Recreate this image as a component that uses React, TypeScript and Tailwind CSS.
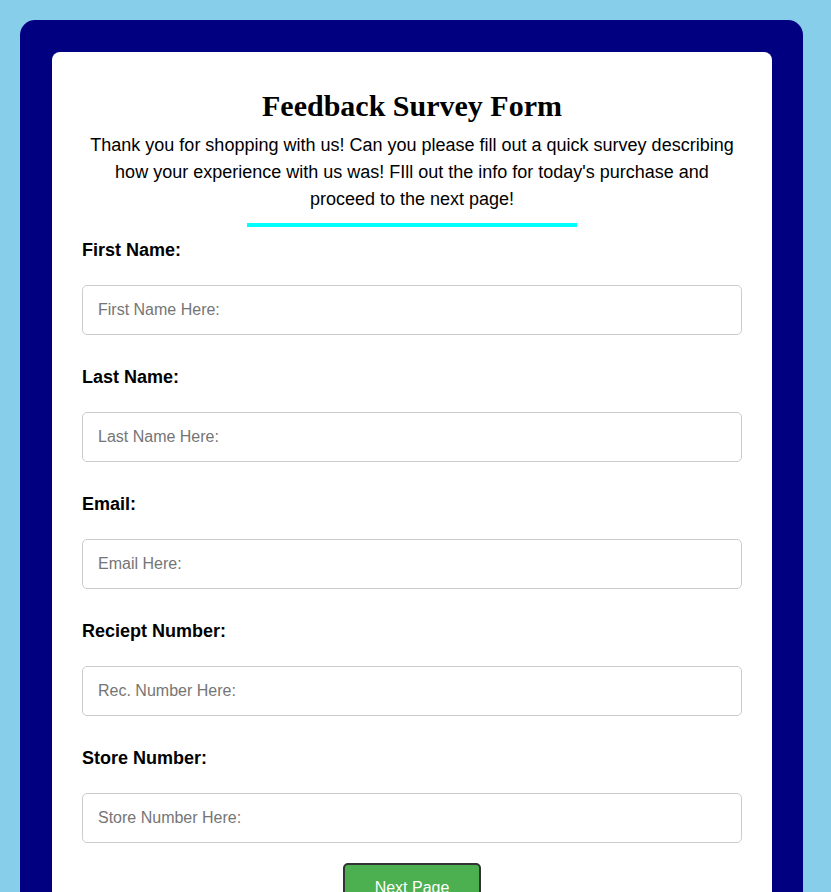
export default function App() {
  const fields = [
    { label: "First Name:", ph: "First Name Here:" },
    { label: "Last Name:", ph: "Last Name Here:" },
    { label: "Email:", ph: "Email Here:" },
    { label: "Reciept Number:", ph: "Rec. Number Here:" },
    { label: "Store Number:", ph: "Store Number Here:" },
  ];
  return (
    <div className="min-h-screen bg-[#87ceeb] pt-[20px] pl-[20px] font-['Liberation_Sans',Arial,sans-serif]">
      <div className="w-[783px] bg-[#000080] rounded-[15px] p-[32px]">
        <div className="w-[720px] bg-white rounded-[8px] px-[30px] pt-[37px] pb-[30px]">
          <h1 className="text-center font-['Liberation_Serif','Times_New_Roman',serif] font-bold text-[30px] leading-[34px] text-black">
            Feedback Survey Form
          </h1>
          <p className="text-center text-[18px] leading-[27px] text-black mt-[9px] px-[8px]">
            Thank you for shopping with us! Can you please fill out a quick survey describing how your experience with us was! FIll out the info for today's purchase and proceed to the next page!
          </p>
          <div className="w-[330px] h-[4px] bg-[#00ffff] mx-auto mt-[10px]" />
          <div className="mt-[13px] flex flex-col gap-[32px]">
            {fields.map((f, i) => (
              <div key={i}>
                <label className="block font-bold text-[18px] leading-[20px] text-black">{f.label}</label>
                <input
                  type="text"
                  placeholder={f.ph}
                  className="block mt-[25px] w-[660px] h-[50px] border border-[#cccccc] rounded-[5px] px-[15px] text-[16px] placeholder:text-[#757575] outline-none"
                />
              </div>
            ))}
          </div>
          <div className="flex justify-center mt-[20px]">
            <button className="bg-[#4caf50] text-white text-[16px] border-2 border-[#333333] rounded-[5px] w-[138px] h-[50px]">
              Next Page
            </button>
          </div>
        </div>
      </div>
    </div>
  );
}
